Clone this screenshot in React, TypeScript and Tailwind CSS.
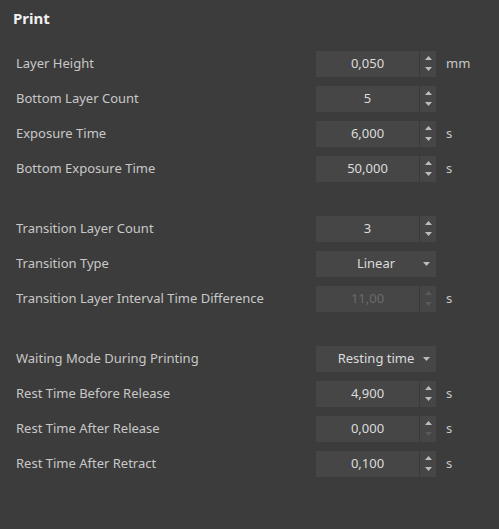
type Row =
  | { kind: "spin"; label: string; value: string; unit?: string; disabled?: boolean; downDisabled?: boolean }
  | { kind: "select"; label: string; value: string };

const groups: Row[][] = [
  [
    { kind: "spin", label: "Layer Height", value: "0,050", unit: "mm" },
    { kind: "spin", label: "Bottom Layer Count", value: "5" },
    { kind: "spin", label: "Exposure Time", value: "6,000", unit: "s" },
    { kind: "spin", label: "Bottom Exposure Time", value: "50,000", unit: "s" },
  ],
  [
    { kind: "spin", label: "Transition Layer Count", value: "3" },
    { kind: "select", label: "Transition Type", value: "Linear" },
    { kind: "spin", label: "Transition Layer Interval Time Difference", value: "11,00", unit: "s", disabled: true },
  ],
  [
    { kind: "select", label: "Waiting Mode During Printing", value: "Resting time" },
    { kind: "spin", label: "Rest Time Before Release", value: "4,900", unit: "s" },
    { kind: "spin", label: "Rest Time After Release", value: "0,000", unit: "s", downDisabled: true },
    { kind: "spin", label: "Rest Time After Retract", value: "0,100", unit: "s" },
  ],
];

const Up = ({ dim }: { dim?: boolean }) => (
  <svg width="7" height="4" viewBox="0 0 7 4" className={dim ? "fill-[#5a5a5a]" : "fill-[#bdbdbd]"}>
    <path d="M0 4 L3.5 0 L7 4 Z" />
  </svg>
);

const Down = ({ dim }: { dim?: boolean }) => (
  <svg width="7" height="4" viewBox="0 0 7 4" className={dim ? "fill-[#5a5a5a]" : "fill-[#bdbdbd]"}>
    <path d="M0 0 L7 0 L3.5 4 Z" />
  </svg>
);

const Field = ({ row }: { row: Row }) => {
  if (row.kind === "select") {
    return (
      <div className="flex h-[26px] w-[120px] items-center bg-[#464646]">
        <span className="flex-1 pl-[17px] text-center text-[13px] text-[#dcdcdc]">{row.value}</span>
        <span className="flex w-[17px] justify-center pr-[2px]">
          <Down />
        </span>
      </div>
    );
  }
  return (
    <div className="flex h-[26px] w-[120px] bg-[#464646]">
      <span
        className={`flex flex-1 items-center justify-center text-[13px] ${
          row.disabled ? "text-[#6a6a6a]" : "text-[#dcdcdc]"
        }`}
      >
        {row.value}
      </span>
      <span className="flex w-[17px] flex-col items-center justify-center gap-[7px] border-l border-[#3a3a3a]">
        <Up dim={row.disabled} />
        <Down dim={row.disabled || row.downDisabled} />
      </span>
    </div>
  );
};

export default function App() {
  return (
    <div
      className="h-[529px] w-[499px] bg-[#3c3c3c] pt-[8px] text-[#c8c8c8]"
      style={{ fontFamily: '"Noto Sans", "Open Sans", sans-serif' }}
    >
      <h1 className="pl-[13px] text-[15px] leading-[20px] font-bold text-[#f0f0f0]">Print</h1>
      <div className="mt-[18px] flex flex-col gap-[25px]">
        {groups.map((g, gi) => (
          <div key={gi} className="flex flex-col">
            {g.map((row) => (
              <div key={row.label} className="flex h-[35px] items-center pl-[16px]">
                <span className="w-[300px] text-[13px]">{row.label}</span>
                <Field row={row} />
                {row.kind === "spin" && row.unit && (
                  <span className="pl-[10px] text-[13px] text-[#c8c8c8]">{row.unit}</span>
                )}
              </div>
            ))}
          </div>
        ))}
      </div>
    </div>
  );
}
